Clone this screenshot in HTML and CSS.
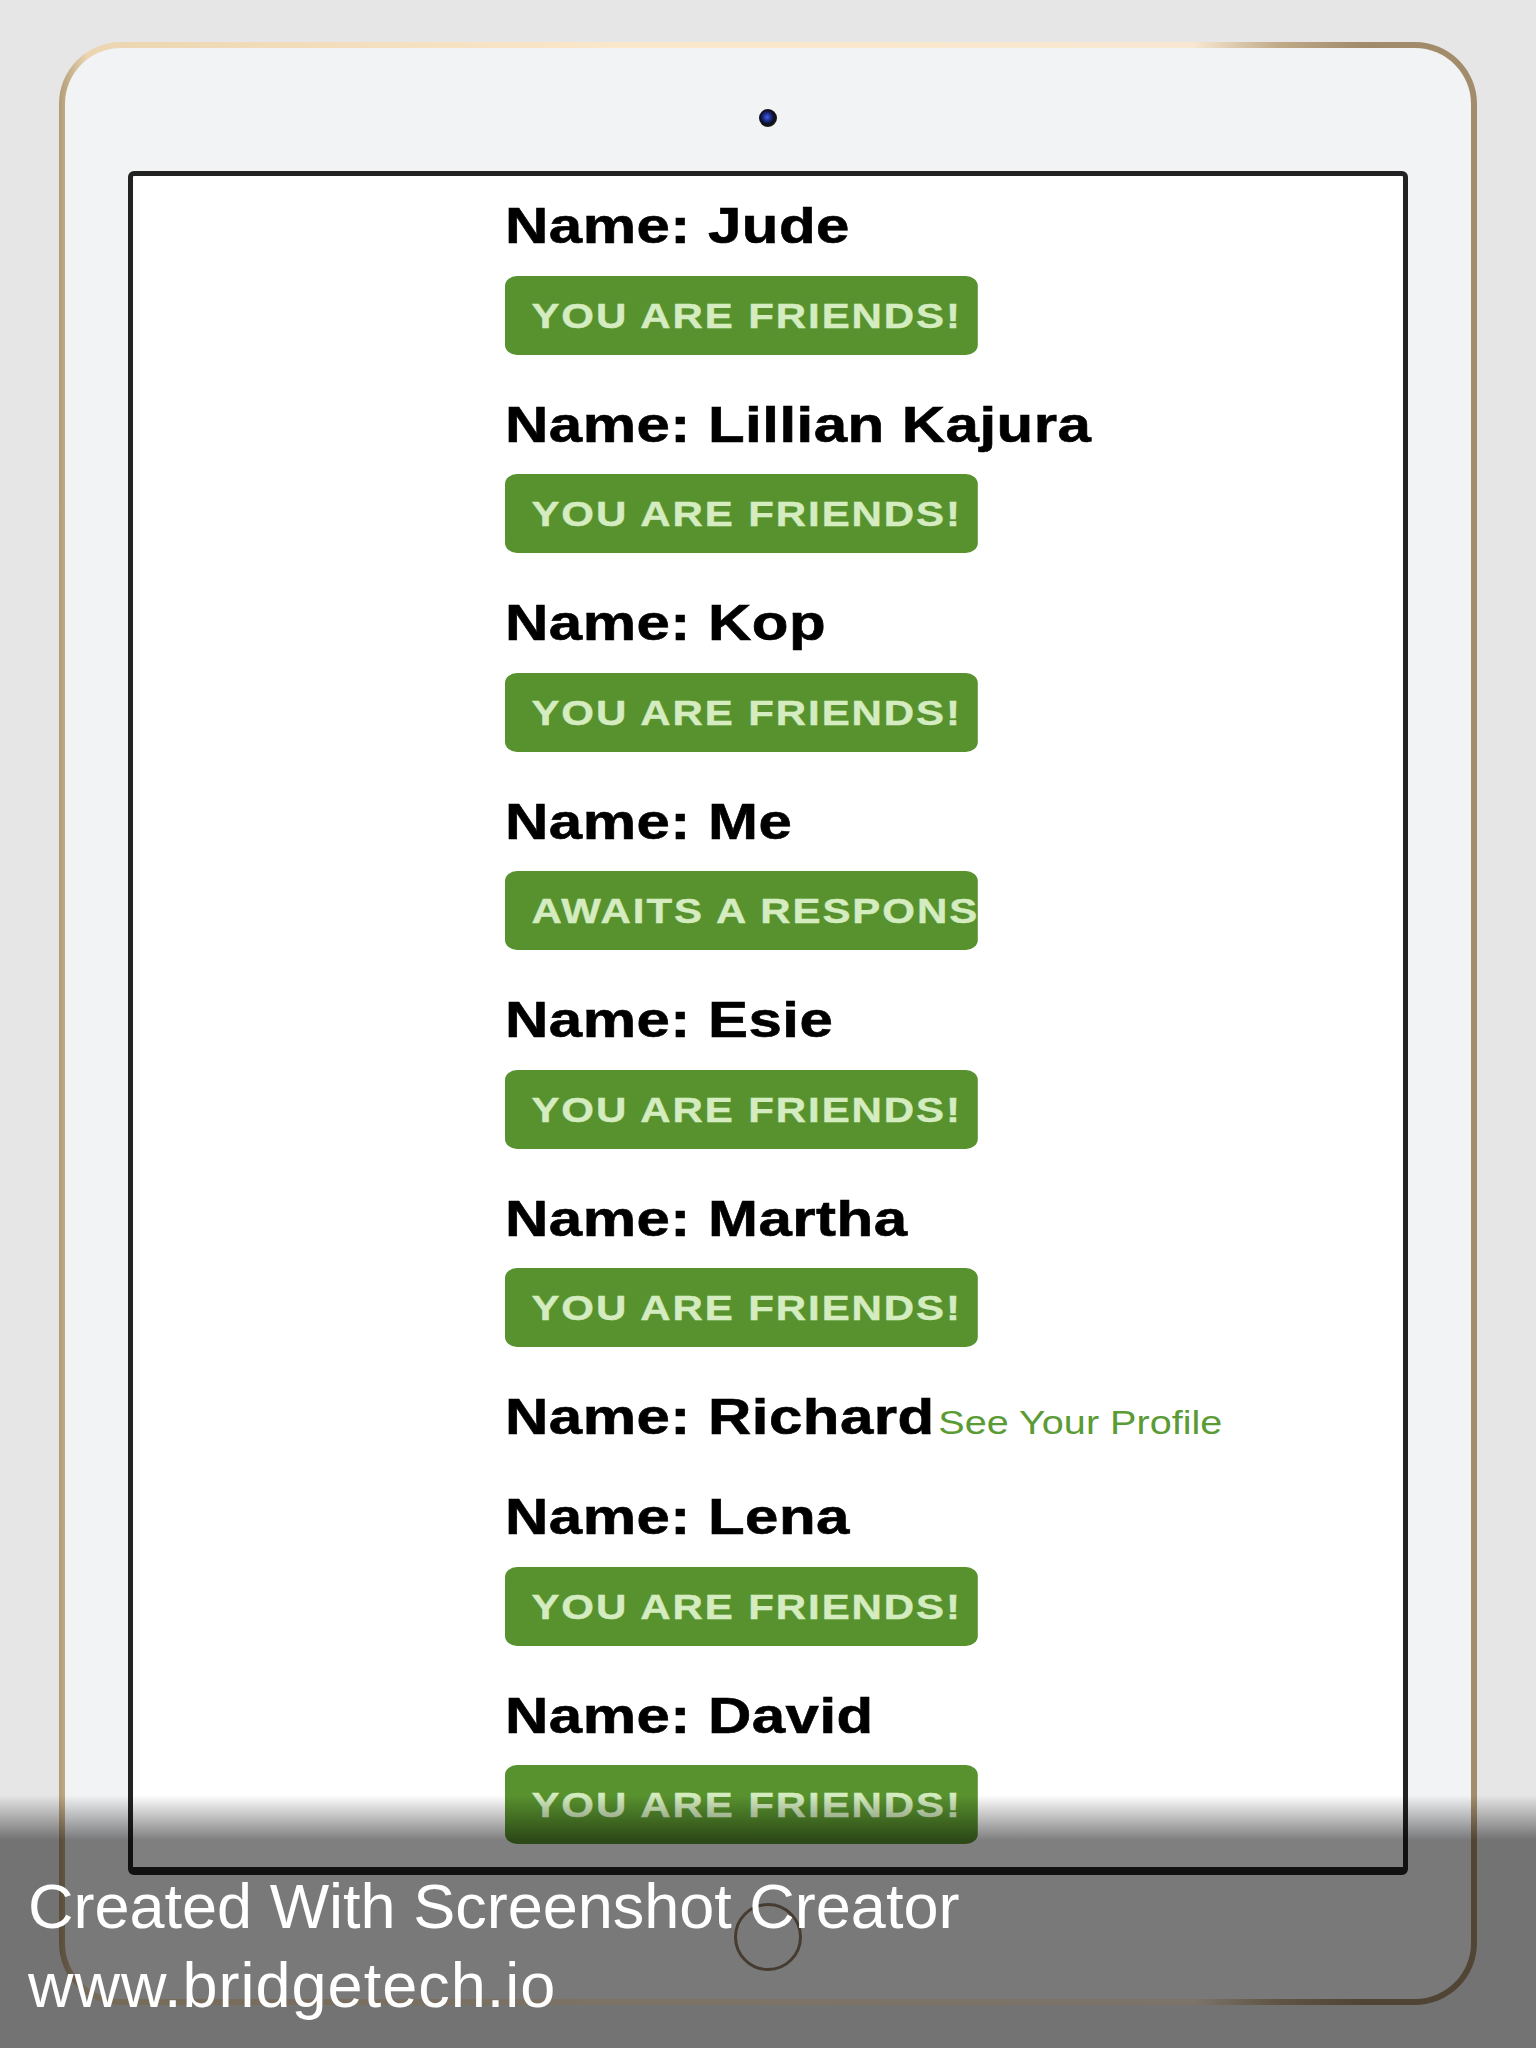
FILE: index.html
```html
<!DOCTYPE html>
<html>
<head>
<meta charset="utf-8">
<link rel="stylesheet" href="styles.css">
</head>
<body>
<div class="page">
  <div class="device">
    <div class="camera"></div>
    <div class="screen">
      <div class="list">
        <div class="item">
          <div class="name">Name: Jude</div>
          <div class="btn">YOU ARE FRIENDS!</div>
        </div>
        <div class="item">
          <div class="name">Name: Lillian Kajura</div>
          <div class="btn">YOU ARE FRIENDS!</div>
        </div>
        <div class="item">
          <div class="name">Name: Kop</div>
          <div class="btn">YOU ARE FRIENDS!</div>
        </div>
        <div class="item">
          <div class="name">Name: Me</div>
          <div class="btn">AWAITS A RESPONSE</div>
        </div>
        <div class="item">
          <div class="name">Name: Esie</div>
          <div class="btn">YOU ARE FRIENDS!</div>
        </div>
        <div class="item">
          <div class="name">Name: Martha</div>
          <div class="btn">YOU ARE FRIENDS!</div>
        </div>
        <div class="item">
          <div class="name">Name: Richard<span class="profile">See Your Profile</span></div>
        </div>
        <div class="item">
          <div class="name">Name: Lena</div>
          <div class="btn">YOU ARE FRIENDS!</div>
        </div>
        <div class="item">
          <div class="name">Name: David</div>
          <div class="btn">YOU ARE FRIENDS!</div>
        </div>
      </div>
    </div>
    <div class="home"></div>
  </div>
</div>
<div class="watermark">
  <p>Created With Screenshot Creator</p>
  <p class="url">www.bridgetech.io</p>
</div>
</body>
</html>
```
FILE: styles.css
```css
html, body {
  margin: 0;
  height: 2048px;
  overflow: hidden;
}
body {
  background: #e6e6e6;
  font-family: "Liberation Sans", Arial, sans-serif;
  position: relative;
}
.page {
  padding: 42px 59px 0;
}
.device {
  box-sizing: border-box;
  width: 1418px;
  height: 1963px;
  border: 6px solid transparent;
  border-radius: 62px;
  background:
    linear-gradient(#f2f3f5, #f2f3f5) padding-box,
    linear-gradient(to right, #b29c78 0%, #ecd5b0 2%, #fbe7ca 40%, #f8e8d2 80%, #c0aa88 86%, #a08a6a 92%, #a28c6c 100%) border-box;
  display: flex;
  flex-direction: column;
  align-items: center;
  padding-top: 61px;
}
.camera {
  width: 18px;
  height: 18px;
  border-radius: 50%;
  background: radial-gradient(circle at 45% 45%, #4460e0 0, #1d2b8a 28%, #0c0e1a 50%, #1b1b1b 72%, #6a6a6a 100%);
  margin-bottom: 44px;
}
.screen {
  box-sizing: border-box;
  width: 1280px;
  height: 1704px;
  border: 5px solid #222;
  border-bottom-width: 8px;
  border-radius: 6px;
  background: #fff;
  overflow: hidden;
  padding: 20px 0 0 372px;
}
.list {
  width: 700px;
  transform: scaleX(1.2);
  transform-origin: 0 0;
}
.item {
  padding-bottom: 40px;
}
.name {
  font-size: 50px;
  font-weight: bold;
  line-height: 60px;
  height: 60px;
  color: #000;
  letter-spacing: 0.4px;
  -webkit-text-stroke: 0.6px #000;
  white-space: nowrap;
}
.profile {
  font-size: 33px;
  font-weight: normal;
  letter-spacing: 0;
  margin-left: 3px;
  color: #5a9b35;
  -webkit-text-stroke: 0;
}
.btn {
  box-sizing: border-box;
  margin-top: 19.5px;
  width: 394px;
  height: 79px;
  background: #58922e;
  border-radius: 10px;
  color: #d4ecc0;
  font-size: 35px;
  font-weight: bold;
  line-height: 79px;
  padding-left: 22px;
  letter-spacing: 1.6px;
  -webkit-text-stroke: 0.4px #d4ecc0;
  white-space: nowrap;
  overflow: hidden;
}
.home {
  box-sizing: border-box;
  width: 68px;
  height: 68px;
  border-radius: 50%;
  border: 3px solid #8a7660;
  margin-top: 28px;
}
.watermark {
  position: absolute;
  left: 0;
  top: 1795px;
  width: 1536px;
  height: 253px;
  box-sizing: border-box;
  padding: 72px 0 0 28px;
  background: linear-gradient(to bottom, rgba(0, 0, 0, 0) 0px, rgba(0, 0, 0, 0.5) 45px, rgba(0, 0, 0, 0.5) 100%);
  color: #fff;
  font-size: 63px;
  line-height: 79px;
}
.watermark p {
  margin: 0;
  white-space: nowrap;
}
.watermark .url {
  letter-spacing: 1px;
}
```
